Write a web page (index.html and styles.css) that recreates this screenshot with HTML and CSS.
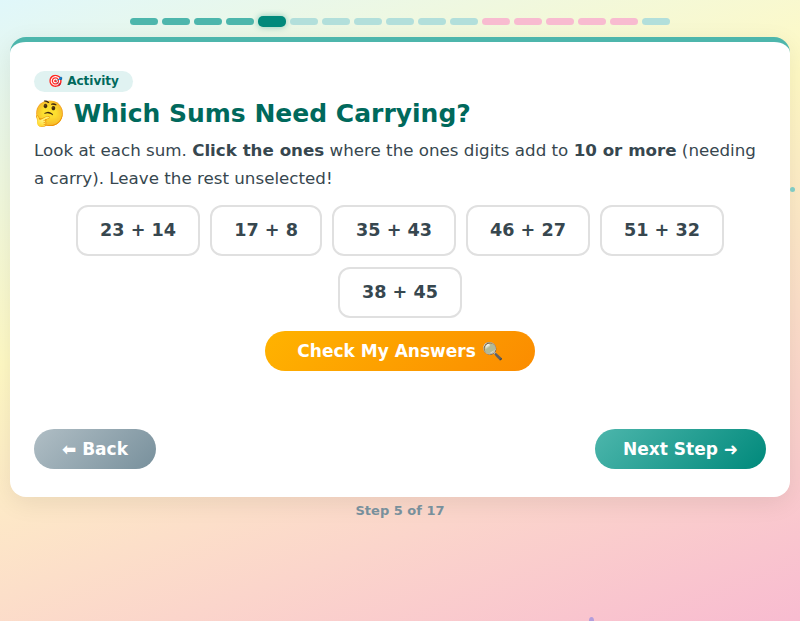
FILE: index.html
```html
<!DOCTYPE html>
<html lang="en">
<head>
<meta charset="utf-8">
<title>Which Sums Need Carrying?</title>
<link rel="stylesheet" href="styles.css">
</head>
<body>
<div class="progress">
  <span class="seg done"></span><span class="seg done"></span><span class="seg done"></span><span class="seg done"></span>
  <span class="seg current"></span>
  <span class="seg todo"></span><span class="seg todo"></span><span class="seg todo"></span><span class="seg todo"></span><span class="seg todo"></span><span class="seg todo"></span>
  <span class="seg pink"></span><span class="seg pink"></span><span class="seg pink"></span><span class="seg pink"></span><span class="seg pink"></span>
  <span class="seg todo"></span>
</div>
<main class="card">
  <span class="badge">🎯 Activity</span>
  <h1 class="title">🤔 Which Sums Need Carrying?</h1>
  <p class="intro">Look at each sum. <strong>Click the ones</strong> where the ones digits add to <strong>10 or more</strong> (needing a carry). Leave the rest unselected!</p>
  <div class="sums">
    <button class="sum">23 + 14</button>
    <button class="sum">17 + 8</button>
    <button class="sum">35 + 43</button>
    <button class="sum">46 + 27</button>
    <button class="sum">51 + 32</button>
    <button class="sum">38 + 45</button>
  </div>
  <div class="check-row"><button class="check">Check My Answers 🔍</button></div>
  <div class="nav">
    <button class="nav-btn back">⬅ Back</button>
    <button class="nav-btn next">Next Step ➜</button>
  </div>
</main>
<div class="step">Step 5 of 17</div>
<span class="dot dot-teal"></span>
<span class="dot dot-purple"></span>
</body>
</html>
```
FILE: styles.css
```css
html, body {
  height: 100%;
}
body {
  margin: 0;
  padding: 16px 10px 0;
  box-sizing: border-box;
  font-family: "DejaVu Sans", sans-serif;
  background: linear-gradient(160deg, #e0f7fa 0%, #fff9c4 40%, #f8bbd0 100%);
  overflow: hidden;
  position: relative;
}
.progress {
  display: flex;
  justify-content: center;
  align-items: center;
  gap: 4px;
  height: 10px;
}
.seg {
  width: 28px;
  height: 7px;
  border-radius: 4px;
}
.seg.done { background: #4db6ac; }
.seg.current {
  height: 11px;
  border-radius: 5px;
  background: #00897b;
  box-shadow: 0 0 6px rgba(0, 137, 123, 0.45);
}
.seg.todo { background: #b2dfdb; }
.seg.pink { background: #f8bbd0; }

.card {
  margin-top: 11px;
  background: #ffffff;
  border-top: 5px solid #4db6ac;
  border-radius: 16px;
  padding: 28px 24px 28px;
  box-shadow: 0 6px 24px rgba(0, 0, 0, 0.08);
}
.badge {
  display: inline-block;
  background: #e0f2f1;
  color: #00695c;
  font-weight: bold;
  font-size: 12px;
  line-height: 21px;
  padding: 0 14px;
  border-radius: 11px;
}
.title {
  margin: 5px 0 0;
  color: #00695c;
  font-size: 25px;
  line-height: 33px;
  height: 33px;
  font-weight: bold;
}
.intro {
  margin: 6px 0 0;
  color: #37474f;
  font-size: 16.7px;
  line-height: 28px;
}
.sums {
  margin-top: 13px;
  display: flex;
  flex-wrap: wrap;
  justify-content: center;
  gap: 11px 10px;
}
.sum {
  font-family: "DejaVu Sans", sans-serif;
  font-weight: bold;
  font-size: 17.6px;
  line-height: 23px;
  color: #37474f;
  background: #ffffff;
  border: 2px solid #e0e0e0;
  border-radius: 12px;
  padding: 12px 22px;
  min-width: 112px;
}
.check-row {
  margin-top: 13px;
  display: flex;
  justify-content: center;
}
.check {
  font-family: "DejaVu Sans", sans-serif;
  font-weight: bold;
  font-size: 17px;
  color: #ffffff;
  height: 40px;
  padding: 0 32px;
  border: none;
  border-radius: 20px;
  background: linear-gradient(135deg, #ffb300, #fb8c00);
}
.nav {
  margin-top: 58px;
  display: flex;
  justify-content: space-between;
}
.nav-btn {
  font-family: "DejaVu Sans", sans-serif;
  font-weight: bold;
  font-size: 17px;
  color: #ffffff;
  height: 40px;
  padding: 0 28px;
  border: none;
  border-radius: 20px;
}
.back { background: linear-gradient(135deg, #b0bec5, #78909c); }
.next { background: linear-gradient(135deg, #4db6ac, #00897b); }
.step {
  margin-top: 6px;
  text-align: center;
  color: #78909c;
  font-weight: bold;
  font-size: 13px;
}
.dot {
  position: absolute;
  border-radius: 50%;
}
.dot-teal {
  left: 790px;
  top: 187px;
  width: 5px;
  height: 5px;
  background: #80cbc4;
}
.dot-purple {
  left: 589px;
  top: 617px;
  width: 5px;
  height: 8px;
  background: #b39ddb;
}
```
